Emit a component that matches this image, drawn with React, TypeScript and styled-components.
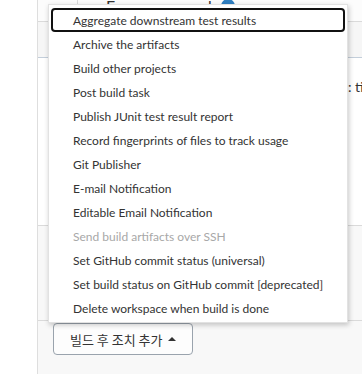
import React from "react";
import styled, { createGlobalStyle } from "styled-components";

const GlobalStyle = createGlobalStyle`
  html, body {
    margin: 0;
    padding: 0;
    background: #fff;
  }
  body {
    font-family: Lato, "Noto Sans", "Noto Sans CJK KR", sans-serif;
    color: #333;
  }
`;

const Page = styled.div`
  display: flex;
  width: 362px;
  height: 374px;
  overflow: hidden;
`;

const Gutter = styled.div`
  flex: none;
  width: 37px;
  background: #fff;
  border-right: 1px solid #dedede;
`;

const Main = styled.div`
  position: relative;
  flex: 1;
  display: flex;
  flex-direction: column;
  background: #f8f8f8;
`;

const StepHeader = styled.div`
  display: flex;
  height: 21px;
  background: #fcfcfc;
  border-bottom: 1px solid #dadada;
`;

const Handle = styled.div`
  flex: none;
  width: 39px;
  border-right: 1px solid #dadada;
`;

const StepTitle = styled.div`
  display: flex;
  align-items: center;
  gap: 9px;
  margin: -10px 0 0 28px;
  font-size: 16px;
  line-height: 20px;
  color: #333;
`;

const HelpDot = styled.span`
  width: 14px;
  height: 14px;
  border-radius: 50%;
  background: #2f7fc1;
`;

const Row = styled.div<{ $h: number; $line?: string; $bg?: string }>`
  flex: none;
  height: ${(p) => p.$h}px;
  background: ${(p) => p.$bg || "#fff"};
  border-bottom: 1px solid ${(p) => p.$line || "#dadada"};
`;

const FieldLabel = styled.div`
  padding: 20px 0 0 310px;
  font-size: 14px;
  white-space: nowrap;
  color: #333;
`;

const ButtonBar = styled.div`
  padding: 2px 0 0 15px;
`;

const AddButton = styled.button`
  display: inline-flex;
  align-items: center;
  gap: 6px;
  height: 32px;
  padding: 0 16px 0 16px;
  border: 1.5px solid #9aa3ad;
  border-radius: 4px;
  background: #fdfdfd;
  font-family: "Noto Sans CJK KR", "Noto Sans", sans-serif;
  font-size: 13px;
  white-space: nowrap;
  color: #333;
`;

const Caret = styled.span`
  width: 0;
  height: 0;
  border-left: 4px solid transparent;
  border-right: 4px solid transparent;
  border-bottom: 4px solid #333;
  margin-top: -1px;
`;

const Menu = styled.ul`
  position: absolute;
  left: 10px;
  top: 4px;
  width: 300px;
  margin: 0;
  padding: 3px 0 2px;
  list-style: none;
  background: #fff;
  border: 1px solid #e2e2e2;
  box-sizing: border-box;
  box-shadow: 1px 2px 5px rgba(0, 0, 0, 0.22);
`;

const Item = styled.li<{ $focus?: boolean; $disabled?: boolean }>`
  display: flex;
  align-items: center;
  height: 24px;
  margin: 0 2px 0 2px;
  padding-left: 20px;
  box-sizing: border-box;
  border: 2px solid ${(p) => (p.$focus ? "#111" : "transparent")};
  border-radius: 4px;
  font-size: 12px;
  white-space: nowrap;
  color: ${(p) => (p.$disabled ? "#a8a8a8" : "#333")};
`;

const items = [
  "Aggregate downstream test results",
  "Archive the artifacts",
  "Build other projects",
  "Post build task",
  "Publish JUnit test result report",
  "Record fingerprints of files to track usage",
  "Git Publisher",
  "E-mail Notification",
  "Editable Email Notification",
  "Send build artifacts over SSH",
  "Set GitHub commit status (universal)",
  "Set build status on GitHub commit [deprecated]",
  "Delete workspace when build is done",
];

export default function App() {
  return (
    <Page>
      <GlobalStyle />
      <Gutter />
      <Main>
        <StepHeader>
          <Handle />
          <StepTitle>
            Exec command <HelpDot />
          </StepTitle>
        </StepHeader>
        <Row $h={35} $line="#c3ceda" $bg="#f6f6f6" />
        <Row $h={167}>
          <FieldLabel>: timeout</FieldLabel>
        </Row>
        <Row $h={94} $bg="#f8f8f8" />
        <ButtonBar>
          <AddButton>
            빌드 후 조치 추가 <Caret />
          </AddButton>
        </ButtonBar>
        <Menu>
          {items.map((t, i) => (
            <Item key={t} $focus={i === 0} $disabled={t.startsWith("Send")}>
              {t}
            </Item>
          ))}
        </Menu>
      </Main>
    </Page>
  );
}
